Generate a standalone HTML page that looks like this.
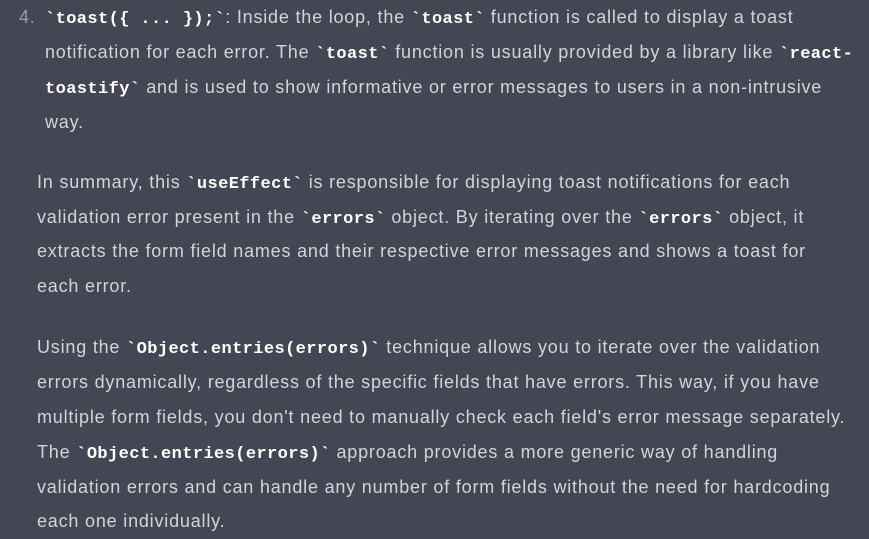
<!DOCTYPE html>
<html><head><style>
body{margin:0;background:#444654;width:869px;height:539px;overflow:hidden;font-family:"Liberation Sans",sans-serif;font-size:18px;letter-spacing:0.8px;color:#d1d5db;}
.l{position:absolute;white-space:nowrap;line-height:35px;height:35px;}
code{font-family:"Liberation Mono",monospace;font-weight:bold;color:#fff;font-size:17px;letter-spacing:0.4px;}
.n{color:#9a9ba6;}
</style></head><body>
<div class="l" style="left:19px;top:0"><span class="n">4.</span></div>
<div class="l" style="left:45px;top:0"><code>`toast({ ... });`</code>: Inside the loop, the <code>`toast`</code> function is called to display a toast</div>
<div class="l" style="left:45px;top:35px">notification for each error. The <code>`toast`</code> function is usually provided by a library like <code>`react-</code></div>
<div class="l" style="left:45px;top:70px"><code>toastify`</code> and is used to show informative or error messages to users in a non-intrusive</div>
<div class="l" style="left:45px;top:105px">way.</div>
<div class="l" style="left:37px;top:165px">In summary, this <code>`useEffect`</code> is responsible for displaying toast notifications for each</div>
<div class="l" style="left:37px;top:200px">validation error present in the <code>`errors`</code> object. By iterating over the <code>`errors`</code> object, it</div>
<div class="l" style="left:37px;top:234px">extracts the form field names and their respective error messages and shows a toast for</div>
<div class="l" style="left:37px;top:269px">each error.</div>
<div class="l" style="left:37px;top:330px">Using the <code>`Object.entries(errors)`</code> technique allows you to iterate over the validation</div>
<div class="l" style="left:37px;top:365px">errors dynamically, regardless of the specific fields that have errors. This way, if you have</div>
<div class="l" style="left:37px;top:400px">multiple form fields, you don't need to manually check each field's error message separately.</div>
<div class="l" style="left:37px;top:435px">The <code>`Object.entries(errors)`</code> approach provides a more generic way of handling</div>
<div class="l" style="left:37px;top:470px">validation errors and can handle any number of form fields without the need for hardcoding</div>
<div class="l" style="left:37px;top:504px">each one individually.</div>
</body></html>
